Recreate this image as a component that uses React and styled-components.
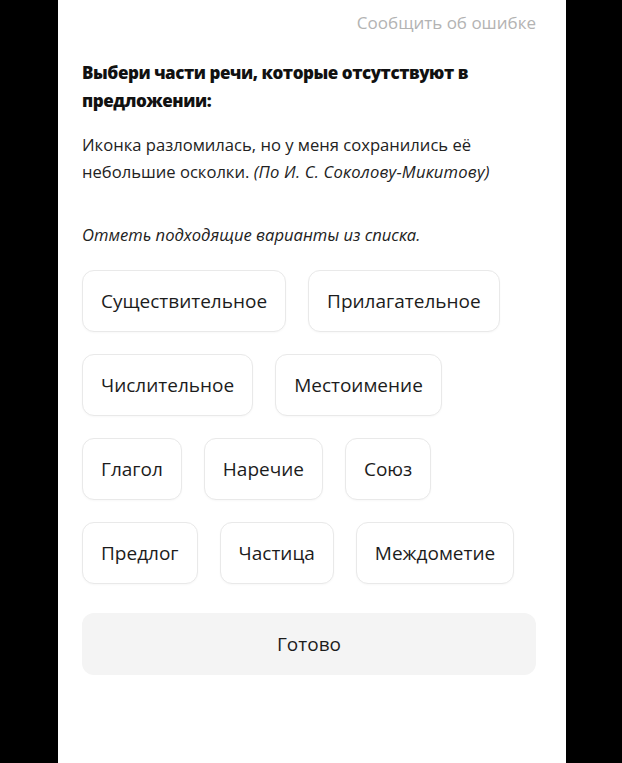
import React from 'react';
import styled, { createGlobalStyle } from 'styled-components';

const GlobalStyle = createGlobalStyle`
  html, body {
    margin: 0;
    padding: 0;
    background: #000;
  }
  body {
    font-family: "Open Sans", "Noto Sans", Arial, sans-serif;
    color: #1c1c1c;
  }
`;

const Page = styled.div`
  display: flex;
  justify-content: center;
  min-height: 763px;
  background: #000;
`;

const Panel = styled.div`
  box-sizing: border-box;
  width: 508px;
  min-height: 763px;
  margin-left: 2px;
  background: #fff;
  padding: 10px 30px 0 24px;
  display: flex;
  flex-direction: column;
`;

const ReportLink = styled.a`
  align-self: flex-end;
  font-size: 17px;
  line-height: 26px;
  color: #b3b3b3;
  text-decoration: none;
  cursor: pointer;
`;

const Title = styled.h2`
  margin: 23px 0 0 0;
  font-size: 17px;
  font-weight: 800;
  letter-spacing: -0.45px;
  line-height: 28px;
  color: #111;
`;

const Sentence = styled.p`
  margin: 16px 0 0 0;
  font-size: 16.6px;
  line-height: 27px;
  color: #222;
`;

const Source = styled.i`
  font-style: italic;
  letter-spacing: 0.2px;
`;

const Hint = styled.p`
  margin: 36px 0 0 0;
  font-size: 16.6px;
  line-height: 27px;
  font-style: italic;
  color: #222;
`;

const Options = styled.div`
  display: flex;
  flex-wrap: wrap;
  gap: 22px;
  margin-top: 22px;
`;

const Chip = styled.button`
  height: 62px;
  padding: 0 18px;
  border: 1px solid #e9e9e9;
  border-radius: 12px;
  background: ${(p) => (p.selected ? '#f4f4f4' : '#fff')};
  box-shadow: 0 1px 2px rgba(0, 0, 0, 0.03);
  font-family: inherit;
  font-size: 19px;
  color: #1c1c1c;
  cursor: pointer;
`;

const Done = styled.button`
  margin-top: 29px;
  height: 62px;
  width: 100%;
  border: none;
  border-radius: 12px;
  background: #f4f4f4;
  font-family: inherit;
  font-size: 19px;
  color: #1c1c1c;
  cursor: pointer;
`;

const options = [
  'Существительное',
  'Прилагательное',
  'Числительное',
  'Местоимение',
  'Глагол',
  'Наречие',
  'Союз',
  'Предлог',
  'Частица',
  'Междометие',
];

export default function App() {
  return (
    <Page>
      <GlobalStyle />
      <Panel>
        <ReportLink>Сообщить об ошибке</ReportLink>
        <Title>Выбери части речи, которые отсутствуют в предложении:</Title>
        <Sentence>
          Иконка разломилась, но у меня сохранились её небольшие осколки.{' '}
          <Source>(По И. С. Соколову-Микитову)</Source>
        </Sentence>
        <Hint>Отметь подходящие варианты из списка.</Hint>
        <Options>
          {options.map((o) => (
            <Chip key={o}>{o}</Chip>
          ))}
        </Options>
        <Done>Готово</Done>
      </Panel>
    </Page>
  );
}
